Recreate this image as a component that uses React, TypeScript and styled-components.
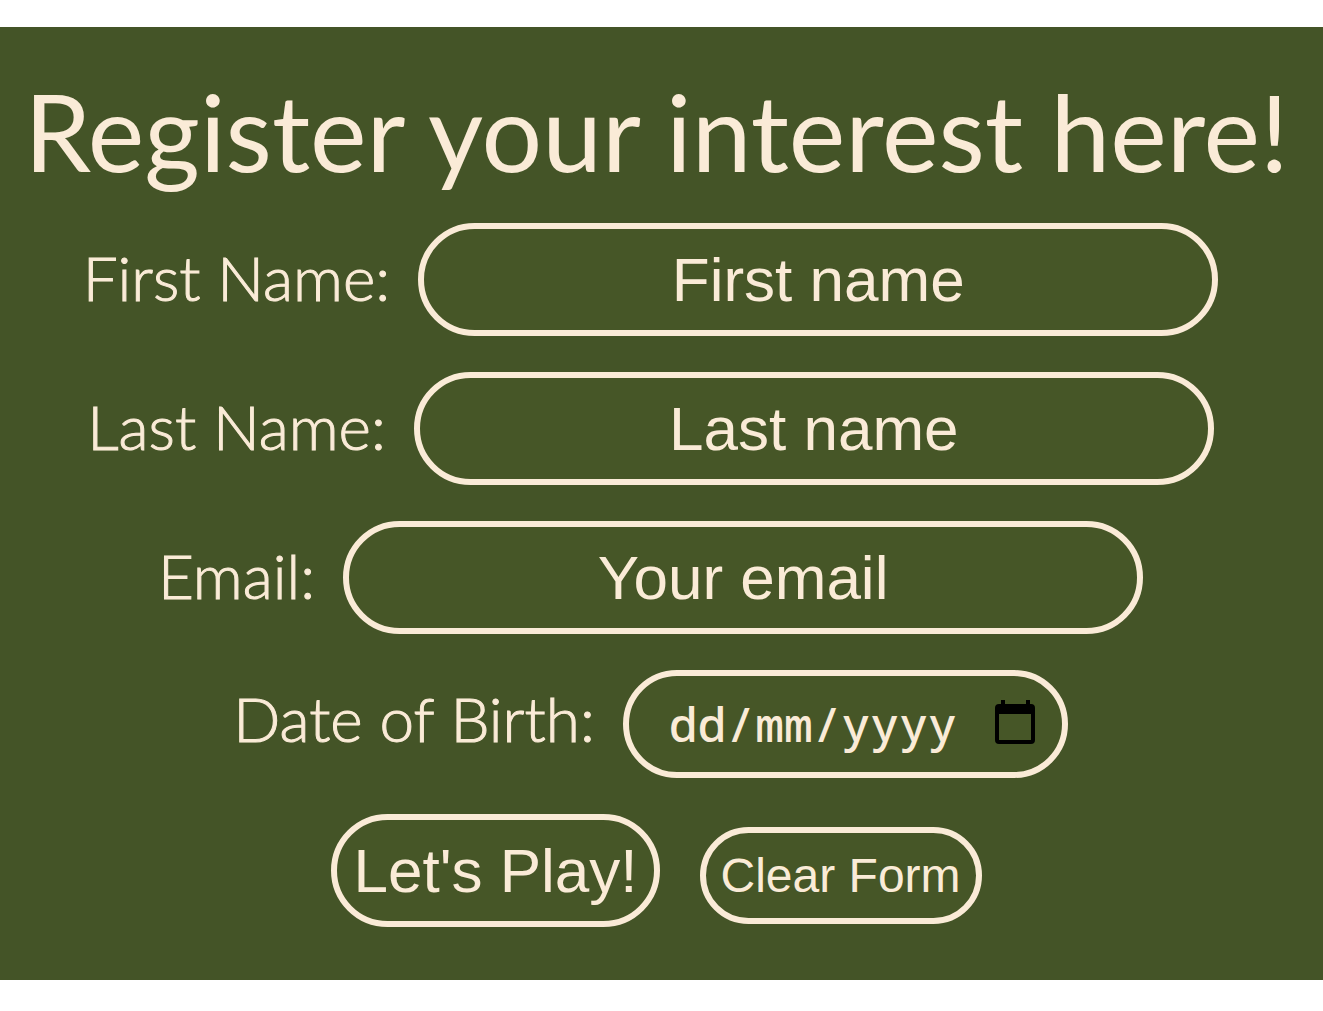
import React from 'react';
import styled, { createGlobalStyle } from 'styled-components';

const cream = '#faebd7';
const green = '#445427';
const fieldGreen = '#465627';

const GlobalStyle = createGlobalStyle`
  * { box-sizing: border-box; }
  body { margin: 0; background: #ffffff; }
`;

const Panel = styled.main`
  margin: 27px 0;
  padding: 38px 0 53px;
  background: ${green};
  color: ${cream};
  font-family: Lato, sans-serif;
`;

const Title = styled.h1`
  margin: 0 0 26px;
  padding-right: 10px;
  font-size: 107px;
  line-height: 132px;
  font-weight: 400;
  text-align: center;
`;

const Form = styled.form`
  display: flex;
  flex-direction: column;
  align-items: center;
  gap: 36px;
`;

const Row = styled.div`
  display: flex;
  justify-content: center;
  align-items: baseline;
  gap: 28px;
  padding-right: 22px;
`;

const Label = styled.label`
  font-family: Lato, sans-serif;
  font-size: 62px;
  line-height: 76px;
  font-weight: 300;
  -webkit-text-stroke: 1px ${cream};
  white-space: nowrap;
`;

const Field = styled.input`
  width: 800px;
  height: 113px;
  padding: 0 16px;
  border: 6px solid ${cream};
  border-radius: 57px;
  background: ${fieldGreen};
  color: ${cream};
  font-family: "Liberation Sans", Arial, sans-serif;
  font-size: 62px;
  text-align: center;
  &::placeholder { color: ${cream}; opacity: 1; }
`;

const DateBox = styled.div`
  display: flex;
  align-items: center;
  justify-content: space-between;
  width: 445px;
  height: 108px;
  padding: 0 26px 2px 40px;
  border: 6px solid ${cream};
  border-radius: 54px;
  background: ${fieldGreen};
`;

const DateInput = styled.input`
  width: 300px;
  padding: 0;
  border: 0;
  background: transparent;
  color: ${cream};
  font-family: "Noto Sans Mono", "DejaVu Sans Mono", monospace;
  font-size: 48px;
  font-weight: 500;
  &::placeholder { color: ${cream}; opacity: 1; }
`;

const PickerButton = styled.button`
  display: flex;
  padding: 0;
  border: 0;
  background: transparent;
  color: #000000;
`;

const Actions = styled(Row)`
  gap: 40px;
  padding-right: 10px;
`;

const Button = styled.button<{ $large?: boolean }>`
  height: ${p => (p.$large ? 113 : 97)}px;
  padding: 0 ${p => (p.$large ? 16 : 15)}px;
  border: 6px solid ${cream};
  border-radius: 57px;
  background: ${fieldGreen};
  color: ${cream};
  font-family: "Liberation Sans", Arial, sans-serif;
  font-size: ${p => (p.$large ? 62 : 48)}px;
  white-space: nowrap;
`;

const textFields = [
  { id: 'first', label: 'First Name:', hint: 'First name', type: 'text' },
  { id: 'last', label: 'Last Name:', hint: 'Last name', type: 'text' },
  { id: 'email', label: 'Email:', hint: 'Your email', type: 'email' },
];

export default function App() {
  return (
    <>
      <GlobalStyle />
      <Panel>
        <Title>Register your interest here!</Title>
        <Form onSubmit={e => e.preventDefault()}>
          {textFields.map(f => (
            <Row key={f.id}>
              <Label htmlFor={f.id}>{f.label}</Label>
              <Field id={f.id} name={f.id} type={f.type} placeholder={f.hint} />
            </Row>
          ))}
          <Row>
            <Label htmlFor="dob">Date of Birth:</Label>
            <DateBox>
              <DateInput id="dob" name="dob" type="text" placeholder="dd/mm/yyyy" />
              <PickerButton type="button" aria-label="Choose a date">
                <svg width="42" height="46" viewBox="0 0 42 46" fill="currentColor">
                  <path fillRule="evenodd" d="M7 0h4v4h21V0h4v4h1a4 4 0 0 1 4 4v32a4 4 0 0 1-4 4H5a4 4 0 0 1-4-4V8a4 4 0 0 1 4-4h2zM5 14v26h32V14z" />
                </svg>
              </PickerButton>
            </DateBox>
          </Row>
          <Actions>
            <Button $large type="submit">Let's Play!</Button>
            <Button type="reset">Clear Form</Button>
          </Actions>
        </Form>
      </Panel>
    </>
  );
}
